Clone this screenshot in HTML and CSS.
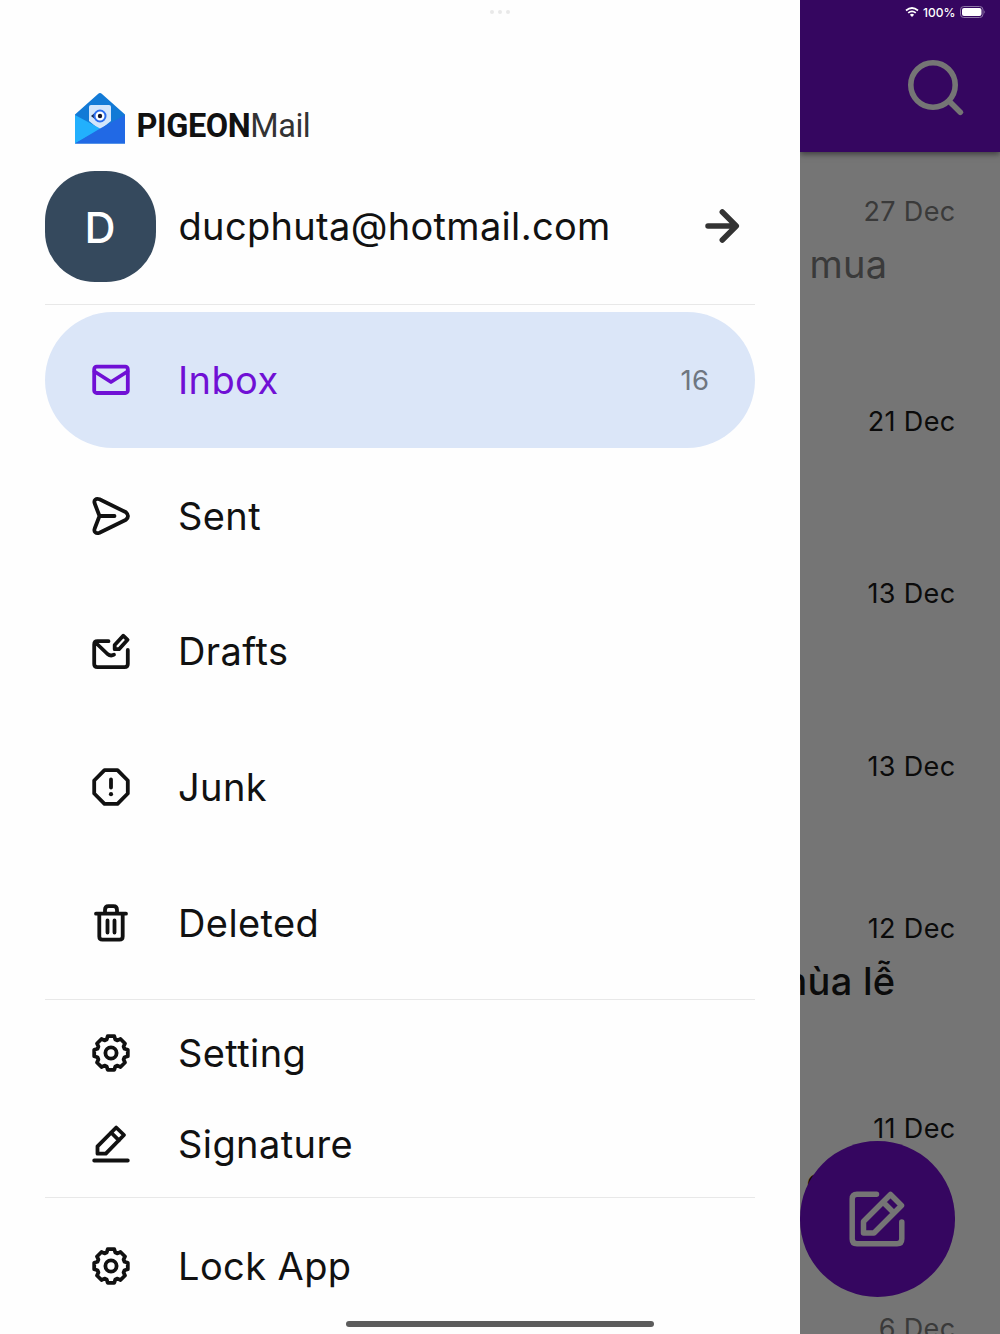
FILE: index.html
```html
<!DOCTYPE html>
<html lang="en">
<head>
    <meta charset="UTF-8">
    <meta name="viewport" content="width=device-width, initial-scale=1.0">
    <title>PIGEONMail</title>
    <link rel="stylesheet" href="styles.css">
</head>
<body>
    <svg width="0" height="0" class="defs">
        <symbol id="gear" viewBox="-20 -20 40 40">
            <path d="M-3.3-16.8H3.3L4.3-13.5L6.5-12.6L9.5-14L14-9.5L12.6-6.5L13.5-4.3L16.8-3.3V3.3L13.5 4.3L12.6 6.5L14 9.5L9.5 14L6.5 12.6L4.3 13.5L3.3 16.8H-3.3L-4.3 13.5L-6.5 12.6L-9.5 14L-14 9.5L-12.6 6.5L-13.5 4.3L-16.8 3.3V-3.3L-13.5-4.3L-12.6-6.5L-14-9.5L-9.5-14L-6.5-12.6L-4.3-13.5Z"/>
            <circle r="5.6"/>
        </symbol>
    </svg>

    <div class="drawer">
        <div class="logo">
            <svg width="50" height="52" viewBox="0 0 50 52">
                <path d="M0 21.5L23 1Q25-.8 27 1L50 21.5V50.500H0Z" fill="#127ad6"/>
                <path d="M14 14Q14 12 16 12H34Q36 12 36 14V28L25 37L14 28Z" fill="#d3e5fb"/>
                <path d="M0 22L26 36L0 50.500Z" fill="#22b0fd"/>
                <path d="M50 22V50.500H0L26 35Z" fill="#2169e5"/>
                <path d="M16 23L21 19V27Z" fill="#16284f"/>
                <circle cx="25" cy="23" r="5.500" fill="#fff" stroke="#2b6df0" stroke-width="2"/>
                <circle cx="25" cy="23" r="2.200" fill="#14142c"/>
            </svg>
            <div class="brand"><b>PIGEON</b>Mail</div>
        </div>

        <div class="account">
            <div class="avatar">D</div>
            <div class="email">ducphuta@hotmail.com</div>
            <svg class="arrow" width="40" height="40" viewBox="0 0 40 40">
                <path d="M6 20H33M20.3 6L34.3 20L20.3 34"/>
            </svg>
        </div>

        <div class="group folders">
            <a class="item active">
                <svg class="icon" viewBox="0 0 40 40"><rect x="3.2" y="6.700" width="33.600" height="26.300" rx="2.500"/><path d="M3.500 11.500L20 22L36.500 11.500"/></svg>
                <span>Inbox</span>
                <span class="count">16</span>
            </a>
            <a class="item">
                <svg class="icon" viewBox="0 0 40 40"><path d="M8.500 20L3.700 7.500C2.500 4 5 2 8.500 3.300L35 16.300Q39 20 35 23.700L8.500 36.700C5 38 2.500 36 3.700 32.500ZH23.500"/></svg>
                <span>Sent</span>
            </a>
            <a class="item">
                <svg class="icon" viewBox="0 0 40 40"><path d="M17.500 10.200H6.500Q3.200 10.200 3.200 13.500V33Q3.200 36.200 6.500 36.200H33.500Q36.800 36.200 36.800 33V19M4.500 11.500L16.500 23Q19.700 25.500 23 23.700M23.700 18.200V14L32.200 4.700L36.600 8.800L28 18.200Z"/></svg>
                <span>Drafts</span>
            </a>
            <a class="item">
                <svg class="icon" viewBox="0 0 40 40"><path d="M13.500 3.200H26.500L36.800 13.500V26.500L26.500 36.800H13.500L3.200 26.500V13.500ZM20 12.500V20.500"/><circle class="dot" cx="20" cy="27.200" r="2.100"/></svg>
                <span>Junk</span>
            </a>
            <a class="item">
                <svg class="icon" viewBox="0 0 40 40"><path d="M5 10.700H35M14 10.500V7Q14 3.200 17.500 3.200H22.500Q26 3.200 26 7V10.500M8.300 11V33.500Q8.300 36.700 11.500 36.700H28.500Q31.700 36.700 31.700 33.500V11M16.500 17.500V29.500M23.500 17.500V29.500"/></svg>
                <span>Deleted</span>
            </a>
        </div>

        <div class="group tools">
            <a class="item small">
                <svg class="icon"><use href="#gear"/></svg>
                <span>Setting</span>
            </a>
            <a class="item small">
                <svg class="icon" viewBox="0 0 40 40"><path d="M3.200 36.500H36.800M6.500 29.700V22.300L25.200 3.500L33 11L14.800 29.700ZM20 8.500L28 16.300"/></svg>
                <span>Signature</span>
            </a>
        </div>

        <div class="group lock">
            <a class="item">
                <svg class="icon"><use href="#gear"/></svg>
                <span>Lock App</span>
            </a>
        </div>
    </div>

    <div class="mailbox">
        <div class="header">
            <div class="status">
                <svg width="14" height="10" viewBox="0 0 14 10">
                    <path d="M1 3.500Q7-1.500 13 3.500M3.200 5.900Q7 2.700 10.800 5.900" fill="none" stroke="#fff" stroke-width="1.700"/>
                    <path d="M4.900 7.700Q7 6 9.100 7.700L7 9.900Z" fill="#fff"/>
                </svg>
                <span>100%</span>
                <svg width="26" height="12" viewBox="0 0 26 12">
                    <rect x=".5" y=".5" width="22.500" height="11" rx="3.300" fill="none" stroke="#8d76a6"/>
                    <rect x="2" y="2" width="19.500" height="8" rx="2" fill="#fff"/>
                    <path d="M24.300 4.200Q26 6 24.300 7.800Z" fill="#8d76a6"/>
                </svg>
            </div>
            <svg class="search" width="58" height="58" viewBox="0 0 58 58">
                <circle cx="27" cy="27" r="22.200"/><path d="M43.500 43.500L54.300 54.300"/>
            </svg>
        </div>
        <div class="mail read first">
            <div class="date">27 Dec</div>
            <div class="subject">mua</div>
        </div>
        <div class="mail"><div class="date">21 Dec</div></div>
        <div class="mail"><div class="date">13 Dec</div></div>
        <div class="mail short"><div class="date">13 Dec</div></div>
        <div class="mail tall">
            <div class="date">12 Dec</div>
            <div class="subject holiday">mùa lễ</div>
        </div>
        <div class="mail tall">
            <div class="date">11 Dec</div>
            <div class="subject sliver">c</div>
        </div>
        <div class="mail read"><div class="date">6 Dec</div></div>

        <div class="compose">
            <svg width="60" height="60" viewBox="0 0 60 60">
                <path d="M29.500 5.200H10Q5.200 5.200 5.200 10V50Q5.200 54.800 10 54.800H50Q54.800 54.800 54.800 50V33M16.500 44V32.500L43.500 5.500L54.500 16.500L27 44ZM36 13L47 24"/>
            </svg>
        </div>
    </div>

    <div class="dots"><i></i><i></i><i></i></div>
    <div class="home-bar"></div>
</body>
</html>
```

FILE: styles.css
```css
* {
    box-sizing: border-box;
}

body {
    margin: 0;
    display: flex;
    height: 1334px;
    overflow: hidden;
    position: relative;
    background: #757575;
    font-family: Inter, "Liberation Sans", sans-serif;
    color: #111;
}

.defs {
    position: absolute;
}

svg {
    display: block;
    flex-shrink: 0;
}

.drawer {
    width: 799.5px;
    flex-shrink: 0;
    height: 1334px;
    overflow: hidden;
    padding: 93px 44.5px 0;
    background: #fefefe;
}

.logo {
    display: flex;
    height: 77.4px;
    padding-left: 30.5px;
    gap: 11.5px;
}

.brand {
    font-family: Roboto, sans-serif;
    font-size: 32.5px;
    line-height: 40px;
    padding-top: 13px;
    letter-spacing: -0.5px;
    color: #333;
}

.brand b {
    color: #111;
    letter-spacing: -0.4px;
}

.account {
    display: flex;
    align-items: center;
    height: 134.5px;
    padding: 0 13px 22px 0;
    border-bottom: 1px solid #e8e8e8;
}

.avatar {
    width: 111px;
    height: 111px;
    border-radius: 50px;
    background: #35495d;
    color: #fff;
    font-size: 43px;
    font-weight: 500;
    line-height: 112px;
    text-align: center;
}

.email {
    flex: 1;
    padding-left: 23px;
    font-size: 38px;
    letter-spacing: 0.32px;
}

.arrow {
    fill: none;
    stroke: #333;
    stroke-width: 5.5;
    stroke-linecap: round;
    stroke-linejoin: round;
}

.folders {
    padding: 7.6px 0 8.5px;
}

.tools {
    border-top: 1px solid #e8e8e8;
    border-bottom: 1px solid #e8e8e8;
    padding: 7.2px 0;
}

.item {
    display: flex;
    align-items: center;
    height: 135.6px;
    padding: 0 45.5px 0 46.5px;
    border-radius: 68px;
    font-size: 38px;
    letter-spacing: 0.4px;
}

.item.small {
    height: 91.5px;
}

.item.active {
    background: #dbe6f8;
    color: #7010d5;
}

.icon {
    width: 40px;
    height: 40px;
    margin-right: 47px;
    fill: none;
    stroke: currentColor;
    stroke-width: 3.8;
    stroke-linecap: round;
    stroke-linejoin: round;
}

.dot {
    fill: currentColor;
    stroke: none;
}

.count {
    margin-left: auto;
    font-size: 27.5px;
    letter-spacing: 0.4px;
    color: #6f7680;
}

/* dimmed mail list behind the drawer */
.mailbox {
    flex: 1;
    height: 1334px;
    overflow: hidden;
    position: relative;
    background: #757575;
    color: #0b0b0b;
}

.header {
    height: 151.5px;
    background: #350660;
    box-shadow: 0 2px 6px rgba(0, 0, 0, 0.5);
    padding: 6px 14.5px 0 0;
}

.status {
    display: flex;
    align-items: center;
    justify-content: flex-end;
    height: 12px;
    gap: 4px;
    color: #fff;
    font-size: 12px;
    font-weight: 500;
}

.search {
    margin: 40px 0 0 106.5px;
    fill: none;
    stroke: #757575;
    stroke-width: 5.6;
    stroke-linecap: round;
}

.mail {
    height: 172.3px;
    padding-top: 44.5px;
    padding-right: 44.5px;
    text-align: right;
}

.mail.first {
    height: 210px;
}

.mail.short {
    height: 162.5px;
}

.mail.tall {
    height: 200px;
}

.mail.read {
    color: #3a3a3a;
}

.date {
    font-size: 27px;
    line-height: 32px;
    letter-spacing: 0.35px;
}

.subject {
    display: flex;
    justify-content: flex-end;
    margin-top: 12px;
    padding-right: 68px;
    font-size: 38px;
    line-height: 48px;
    letter-spacing: 0.3px;
    white-space: nowrap;
}

.subject.holiday {
    padding-right: 60px;
    font-weight: 500;
}

.subject.sliver {
    padding-right: 127px;
    font-weight: 500;
}

.compose {
    position: absolute;
    left: 0;
    top: 1141px;
    width: 155.5px;
    height: 155.5px;
    border-radius: 50%;
    background: #350660;
    display: flex;
    align-items: center;
    justify-content: center;
}

.compose svg {
    fill: none;
    stroke: #757575;
    stroke-width: 5.5;
    stroke-linecap: round;
    stroke-linejoin: round;
}

.dots {
    position: absolute;
    top: 10px;
    left: 490px;
    display: flex;
    gap: 4px;
}

.dots i {
    width: 4px;
    height: 4px;
    border-radius: 50%;
    background: #e9e9e9;
}

.home-bar {
    position: absolute;
    left: 346px;
    top: 1320.5px;
    width: 308px;
    height: 6px;
    border-radius: 3px;
    background: #5c5c5c;
}
```
